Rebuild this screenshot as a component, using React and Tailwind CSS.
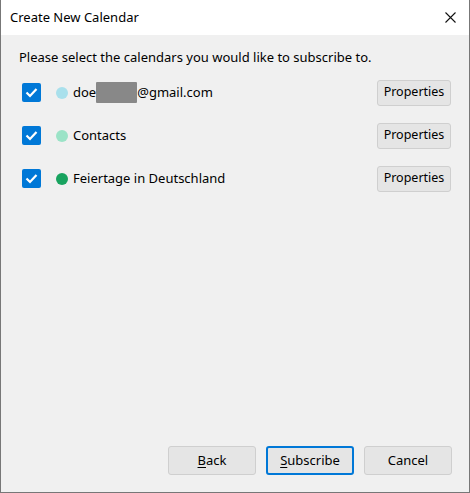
import React from "react";

const font = { fontFamily: '"Segoe UI", "Noto Sans", sans-serif' };

function Check() {
  return (
    <div className="w-[19px] h-[19px] rounded-[2px] bg-[#0078d7] flex items-center justify-center shrink-0">
      <svg width="13" height="11" viewBox="0 0 13 11" fill="none">
        <path d="M1.5 5.5 L5 9 L11.5 2" stroke="white" strokeWidth="2.2" />
      </svg>
    </div>
  );
}

function Row({ color, children }) {
  return (
    <div className="flex items-center h-[25px] pl-[21px] pr-[18px]">
      <Check />
      <div className="w-[12px] h-[12px] rounded-full ml-[15px] shrink-0" style={{ backgroundColor: color }} />
      <div className="ml-[5px] flex-1 flex items-center text-[13px] text-black">{children}</div>
      <button className="w-[74px] h-[26px] rounded-[3px] bg-[#e5e5e5] border border-[#cfcfcf] text-[12.5px] text-black">
        Properties
      </button>
    </div>
  );
}

export default function App() {
  return (
    <div className="w-[470px] h-[493px] flex flex-col border-x border-b border-[#777777] bg-[#f0f0f0]" style={font}>
      <div className="h-[35px] bg-white flex items-center justify-between pl-[9px] pr-[13px] shrink-0">
        <span className="text-[13px] text-black">Create New Calendar</span>
        <svg width="11" height="11" viewBox="0 0 11 11">
          <path d="M0.5 0.5 L10.5 10.5 M10.5 0.5 L0.5 10.5" stroke="#111" strokeWidth="1.1" />
        </svg>
      </div>
      <div className="flex-1 flex flex-col">
        <div className="pl-[18px] pt-[12px] text-[13px] text-black h-[22px] box-content leading-[20px]">
          Please select the calendars you would like to subscribe to.
        </div>
        <div className="flex flex-col gap-[18px] mt-[11px]">
          <Row color="#a9e0ec">
            <span>doe</span>
            <span className="inline-block w-[41px] h-[21px] bg-[#888888] rounded-[1px]" />
            <span>@gmail.com</span>
          </Row>
          <Row color="#9be3c7">Contacts</Row>
          <Row color="#18a35f">Feiertage in Deutschland</Row>
        </div>
        <div className="flex-1" />
        <div className="flex justify-end gap-[10px] pr-[17px] pb-[17px]">
          <button className="w-[88px] h-[29px] rounded-[3px] bg-[#e5e5e5] border border-[#cfcfcf] text-[13px] text-black">
            <span className="underline underline-offset-2">B</span>ack
          </button>
          <button className="w-[88px] h-[29px] rounded-[3px] bg-[#e5e5e5] border-2 border-[#0078d7] text-[13px] text-black">
            <span className="underline underline-offset-2">S</span>ubscribe
          </button>
          <button className="w-[88px] h-[29px] rounded-[3px] bg-[#e5e5e5] border border-[#cfcfcf] text-[13px] text-black">
            Cancel
          </button>
        </div>
      </div>
    </div>
  );
}
